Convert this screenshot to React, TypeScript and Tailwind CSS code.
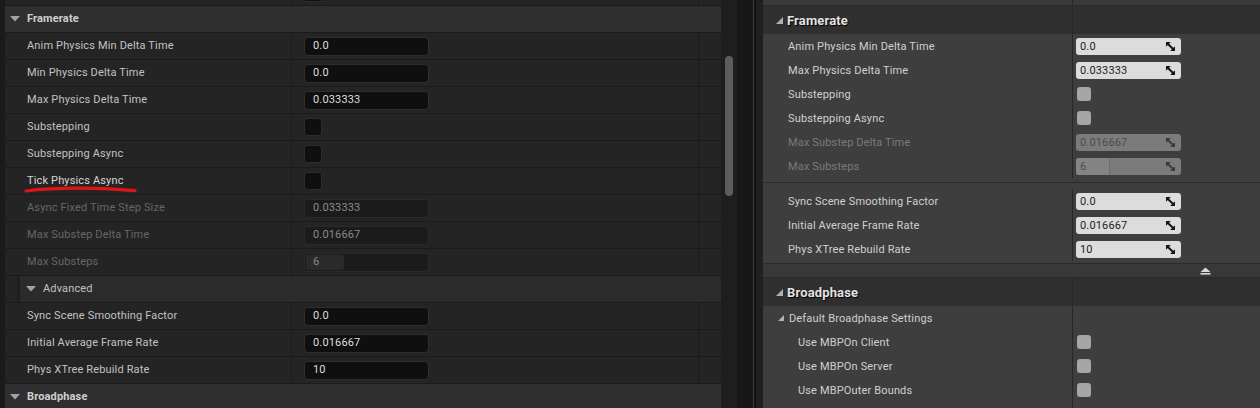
import React from 'react';

const DownTri = () => (
  <svg width="10" height="6" viewBox="0 0 10 6" className="block">
    <path d="M0 0H10L5 5.5Z" fill="#a3a3a3" />
  </svg>
);

const CornerTri = () => (
  <svg width="7" height="7" viewBox="0 0 7 7" className="block">
    <path d="M7 0V7H0Z" fill="#b0b0b0" />
  </svg>
);

const ResizeIcon = ({ color }: { color: string }) => (
  <svg width="9" height="9" viewBox="0 0 9 9" className="block">
    <path d="M0 0H4.8L0 4.8Z" fill={color} />
    <path d="M9 9H4.2L9 4.2Z" fill={color} />
    <path d="M1.2 1.2L7.8 7.8" stroke={color} strokeWidth="2" />
  </svg>
);

type Kind = 'input' | 'check' | 'slider';

function LRow({
  label,
  kind,
  value,
  disabled,
  mark,
}: {
  label: string;
  kind: Kind;
  value?: string;
  disabled?: boolean;
  mark?: boolean;
}) {
  return (
    <div className="flex h-[27px] shrink-0 border-b border-[#1b1b1b]">
      <div
        className={`relative flex w-[286px] items-center pb-[2px] pl-[22px] ${
          disabled ? 'text-[#676767]' : mark ? 'text-[#d6d6d6]' : 'text-[#c2c2c2]'
        }`}
      >
        {label}
        {mark && (
          <svg
            width="114"
            height="9"
            viewBox="0 0 114 9"
            className="absolute left-[19px] top-[17px]"
          >
            <path
              d="M2 6C20 3.6 45 2.8 70 3.4C88 3.8 101 4.8 111 5.6"
              stroke="#e01414"
              strokeWidth="3.2"
              fill="none"
              strokeLinecap="round"
            />
          </svg>
        )}
      </div>
      <div className="flex w-[407px] items-center border-l border-[#1b1b1b] pl-[12px]">
        {kind === 'check' && (
          <div className="h-[18px] w-[18px] rounded-[3px] border border-[#2c2c2c] bg-[#0f0f0f]" />
        )}
        {kind === 'input' && (
          <div
            className={`flex h-[19px] w-[125px] items-center rounded-[4px] border px-[8px] pb-[1px] ${
              disabled
                ? 'border-[#2a2a2a] bg-[#1b1b1b] text-[#8a8a8a]'
                : 'border-[#2e2e2e] bg-[#0f0f0f] text-[#dedede]'
            }`}
          >
            {value}
          </div>
        )}
        {kind === 'slider' && (
          <div className="flex h-[19px] w-[125px] items-center overflow-hidden rounded-[4px] border border-[#2a2a2a] bg-[#1b1b1b] p-[1px] text-[#8a8a8a]">
            <div className="flex h-full w-[38px] items-center rounded-[3px] bg-[#2a2a2a] pb-[1px] pl-[7px]">
              {value}
            </div>
          </div>
        )}
      </div>
      <div className="w-[23px] border-l border-[#1b1b1b]" />
    </div>
  );
}

function LHeader({ label }: { label: string }) {
  return (
    <div className="flex h-[27px] shrink-0 items-center border-b border-[#1b1b1b] bg-[#2f2f2f] pl-[5px] font-bold text-[#cfcfcf]">
      <div className="w-[17px]">
        <DownTri />
      </div>
      <span className="pb-[2px]">{label}</span>
    </div>
  );
}

function RRow({
  label,
  kind,
  value,
  disabled,
  indent,
}: {
  label: string;
  kind: Kind;
  value?: string;
  disabled?: boolean;
  indent?: number;
}) {
  const pl = indent === 2 ? 'pl-[35px]' : 'pl-[25px]';
  return (
    <div className="flex h-[24px] shrink-0">
      <div
        className={`flex w-[309px] items-center ${pl} ${
          disabled ? 'text-[#7a7a7a]' : 'text-[#d0d0d0]'
        }`}
      >
        {label}
      </div>
      <div className="flex flex-1 items-center border-l border-[#272727] pl-[3px]">
        {kind === 'check' && (
          <div className="ml-[1px] h-[14px] w-[14px] rounded-[3px] bg-[#a6a6a6]" />
        )}
        {kind === 'input' && (
          <div
            className={`flex h-[17px] w-[105px] items-center justify-between rounded-[3px] pl-[4px] pr-[6px] ${
              disabled ? 'bg-[#7b7b7b] text-[#4c4c4c]' : 'bg-[#dcdcdc] text-[#1c1c1c]'
            }`}
          >
            <span>{value}</span>
            <ResizeIcon color={disabled ? '#3a3a3a' : '#151515'} />
          </div>
        )}
        {kind === 'slider' && (
          <div className="flex h-[17px] w-[105px] items-center overflow-hidden rounded-[3px] bg-[#7b7b7b] text-[#4c4c4c]">
            <div className="flex h-full w-[34px] items-center border-r border-[#6e6e6e] bg-[#848484] pl-[4px]">
              {value}
            </div>
            <div className="flex flex-1 justify-end pr-[6px]">
              <ResizeIcon color="#3a3a3a" />
            </div>
          </div>
        )}
      </div>
    </div>
  );
}

function RHeader({ label }: { label: string }) {
  return (
    <div className="flex h-[28px] shrink-0 bg-[#2f2f2f]">
      <div className="flex w-[309px] items-center pl-[13px] text-[13px] font-bold text-[#e2e2e2] [text-shadow:1px_1px_1px_#000]">
        <div className="mr-[4px]">
          <CornerTri />
        </div>
        {label}
      </div>
      <div className="flex-1 border-l border-[#272727]" />
    </div>
  );
}

export default function App() {
  return (
    <div className="flex h-[408px] w-[1260px] overflow-hidden bg-[#1b1b1b] font-['Roboto',sans-serif] text-[11px] leading-none tracking-[0.15px]">
      <div className="w-[5px] shrink-0 bg-[#1a1a1a]" />
      {/* Left panel */}
      <div className="flex w-[716px] shrink-0 flex-col bg-[#242424]">
        <div className="flex h-[6px] shrink-0 border-b border-[#1b1b1b]">
          <div className="w-[286px]" />
          <div className="w-[407px] border-l border-[#1b1b1b] pl-[12px]">
            <div className="h-[2px] w-[18px] rounded-b-[3px] border-x border-b border-[#2c2c2c] bg-[#0f0f0f]" />
          </div>
          <div className="w-[23px] border-l border-[#1b1b1b]" />
        </div>
        <LHeader label="Framerate" />
        <LRow label="Anim Physics Min Delta Time" kind="input" value="0.0" />
        <LRow label="Min Physics Delta Time" kind="input" value="0.0" />
        <LRow label="Max Physics Delta Time" kind="input" value="0.033333" />
        <LRow label="Substepping" kind="check" />
        <LRow label="Substepping Async" kind="check" />
        <LRow label="Tick Physics Async" kind="check" mark />
        <LRow label="Async Fixed Time Step Size" kind="input" value="0.033333" disabled />
        <LRow label="Max Substep Delta Time" kind="input" value="0.016667" disabled />
        <LRow label="Max Substeps" kind="slider" value="6" disabled />
        <div className="flex h-[27px] shrink-0 border-b border-[#1b1b1b]">
          <div className="w-[12px] bg-[#242424]" />
          <div className="w-[3px] bg-[#1f1f1f]" />
          <div className="flex flex-1 items-center bg-[#2b2b2b] pl-[6px] text-[#c2c2c2]">
            <div className="w-[17px]">
              <DownTri />
            </div>
            <span className="pb-[2px]">Advanced</span>
          </div>
        </div>
        <LRow label="Sync Scene Smoothing Factor" kind="input" value="0.0" />
        <LRow label="Initial Average Frame Rate" kind="input" value="0.016667" />
        <LRow label="Phys XTree Rebuild Rate" kind="input" value="10" />
        <LHeader label="Broadphase" />
      </div>
      {/* Scrollbar */}
      <div className="w-[16px] shrink-0 bg-[#1e1e1e] pl-[4px] pt-[56px]">
        <div className="h-[140px] w-[8px] rounded-full bg-[#5c5c5c]" />
      </div>
      <div className="w-[16px] shrink-0 bg-[#171717]" />
      <div className="w-[1px] shrink-0 bg-[#3c3c3c]" />
      <div className="w-[2px] shrink-0 bg-[#121212]" />
      <div className="w-[7px] shrink-0 bg-[#202020]" />
      {/* Right panel */}
      <div className="flex flex-1 flex-col bg-[#3e3e3e]">
        <div className="flex h-[6px] shrink-0 border-b border-[#2a2a2a] bg-[#393939]">
          <div className="w-[309px]" />
          <div className="flex-1 border-l border-[#272727]" />
        </div>
        <RHeader label="Framerate" />
        <RRow label="Anim Physics Min Delta Time" kind="input" value="0.0" />
        <RRow label="Max Physics Delta Time" kind="input" value="0.033333" />
        <RRow label="Substepping" kind="check" />
        <RRow label="Substepping Async" kind="check" />
        <RRow label="Max Substep Delta Time" kind="input" value="0.016667" disabled />
        <RRow label="Max Substeps" kind="slider" value="6" disabled />
        <div className="h-[4px] shrink-0" />
        <div className="h-[1px] shrink-0 bg-[#2b2b2b]" />
        <div className="h-[6px] shrink-0" />
        <RRow label="Sync Scene Smoothing Factor" kind="input" value="0.0" />
        <RRow label="Initial Average Frame Rate" kind="input" value="0.016667" />
        <RRow label="Phys XTree Rebuild Rate" kind="input" value="10" />
        <div className="h-[2px] shrink-0" />
        <div className="h-[1px] shrink-0 bg-[#2b2b2b]" />
        <div className="flex h-[13px] shrink-0 items-center justify-end bg-[#383838] pr-[49px]">
          <svg width="11" height="8" viewBox="0 0 11 8" className="block">
            <path d="M0.5 5L5.5 0.5L10.5 5Z" fill="#d8d8d8" />
            <rect x="0.5" y="6" width="10" height="1.6" fill="#d8d8d8" />
          </svg>
        </div>
        <div className="h-[1px] shrink-0 bg-[#2b2b2b]" />
        <RHeader label="Broadphase" />
        <div className="flex h-[24px] shrink-0">
          <div className="flex w-[309px] items-center pl-[15px] text-[#d0d0d0]">
            <div className="mr-[5px]">
              <svg width="6" height="6" viewBox="0 0 6 6" className="block">
                <path d="M6 0V6H0Z" fill="#b0b0b0" />
              </svg>
            </div>
            Default Broadphase Settings
          </div>
          <div className="flex-1 border-l border-[#272727]" />
        </div>
        <RRow label="Use MBPOn Client" kind="check" indent={2} />
        <RRow label="Use MBPOn Server" kind="check" indent={2} />
        <RRow label="Use MBPOuter Bounds" kind="check" indent={2} />
        <div className="flex h-[24px] shrink-0">
          <div className="w-[309px]" />
          <div className="flex-1 border-l border-[#272727]" />
        </div>
      </div>
    </div>
  );
}
